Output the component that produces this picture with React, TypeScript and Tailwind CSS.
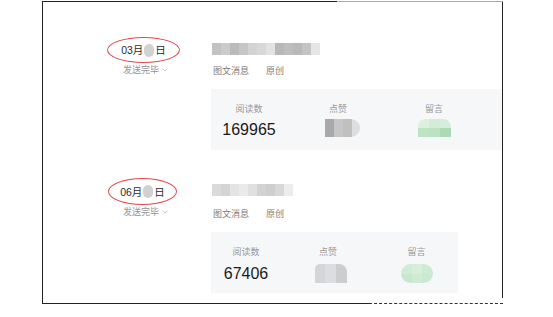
import { ChevronDown } from "lucide-react";

type Post = {
  month: string;
  ellipse: string;
  titleBlocks: string[];
  titleGap: string;
  rowGap: string;
  reads: string;
  numberGap: string;
  like: React.ReactNode;
  comment: React.ReactNode;
  panelWidth: string;
};

const FONT = "font-['Liberation_Sans','Noto_Sans_CJK_SC',sans-serif]";

const POSTS: Post[] = [
  {
    month: "03月",
    ellipse: "w-[73px] h-[26px]",
    titleBlocks: [
      "#c2c2c2",
      "#cbcbcb",
      "#bababa",
      "#c6c6c6",
      "#d3d3d3",
      "#d8d8d8",
      "#e2e2e2",
      "#b8b8b8",
      "#bebebe",
      "#b9b9b9",
      "#c4c4c4",
      "#e6e6e6",
    ],
    titleGap: "mt-[10px]",
    rowGap: "mt-0",
    reads: "169965",
    numberGap: "mt-[5px]",
    panelWidth: "w-[291px]",
    like: (
      <div className="mt-[4px] ml-[8px] flex h-[18px] overflow-hidden rounded-r-full blur-[0.4px]">
        <div className="w-[9px] bg-[#a9a9a9]" />
        <div className="w-[9px] bg-[#c6c6c6]" />
        <div className="w-[9px] bg-[#c0c0c0]" />
        <div className="w-[8px] bg-[#dedee0]" />
      </div>
    ),
    comment: (
      <div className="mt-[4px] ml-px grid h-[18px] w-[33px] grid-cols-3 grid-rows-2 overflow-hidden rounded-t-[8px] blur-[0.4px]">
        <div className="bg-[#dcf0e0]" />
        <div className="bg-[#d2ecd8]" />
        <div className="bg-[#d6eddb]" />
        <div className="bg-[#bde3c4]" />
        <div className="bg-[#bce2c3]" />
        <div className="bg-[#acdab5]" />
      </div>
    ),
  },
  {
    month: "06月",
    ellipse: "w-[69px] h-[27px] ml-px",
    titleBlocks: [
      "#dadada",
      "#d4d4d4",
      "#e4e4e4",
      "#eaeaea",
      "#e0e0e0",
      "#d2d2d2",
      "#cecece",
      "#d8d8d8",
      "#ececec",
    ],
    titleGap: "mt-[12px]",
    rowGap: "mt-[28px]",
    reads: "67406",
    numberGap: "mt-[6px]",
    panelWidth: "w-[247px]",
    like: (
      <div className="mt-[6px] ml-[6px] flex h-[19px] overflow-hidden rounded-tr-[8px] rounded-tl-[5px] blur-[0.4px]">
        <div className="w-[10px] bg-[#d5d5d7]" />
        <div className="w-[11px] bg-[#dcdde0]" />
        <div className="w-[11px] bg-[#cdcdcf]" />
      </div>
    ),
    comment: (
      <div className="mt-[6px] ml-px grid h-[19px] w-[32px] grid-cols-3 grid-rows-2 overflow-hidden rounded-full blur-[0.5px]">
        <div className="bg-[#d0ecd6]" />
        <div className="bg-[#d6efdb]" />
        <div className="bg-[#cdead3]" />
        <div className="bg-[#c8e8cd]" />
        <div className="bg-[#cfebd4]" />
        <div className="bg-[#cae9d0]" />
      </div>
    ),
  },
];

function PostRow({ post }: { post: Post }) {
  return (
    <div className={`flex items-start ${post.rowGap}`}>
      <div className="w-[168px] shrink-0 pl-[64px]">
        <div
          className={`flex items-center justify-center rounded-[50%] border border-[#e2474c] ${post.ellipse}`}
        >
          <span className="text-[10.5px] leading-[12px] text-[#2a2a2a]">{post.month}</span>
          <span className="mx-[1px] h-[13px] w-[10px] rounded-full bg-[#d2d0d0] blur-[0.5px]" />
          <span className="text-[10.5px] leading-[12px] text-[#2a2a2a]">日</span>
        </div>
        <div className="mt-px ml-[16px] flex items-center text-[9px] leading-[12px] text-[#949494]">
          <span>发送完毕</span>
          <ChevronDown className="ml-[2px] h-[8px] w-[8px]" strokeWidth={1.5} />
        </div>
      </div>

      <div className="flex flex-col">
        <div className="ml-px mt-[6px] flex h-[12px] overflow-hidden rounded-r-[5px] blur-[0.3px]">
          {post.titleBlocks.map((c, i) => (
            <div key={i} className="w-[9px]" style={{ backgroundColor: c }} />
          ))}
        </div>
        <div className={`${post.titleGap} ml-[2px] flex gap-[17px] text-[9px] leading-[12px] text-[#7c7c7c]`}>
          <span>图文消息</span>
          <span>原创</span>
        </div>
        <div className={`mt-[12px] flex h-[61px] bg-[#f6f7f9] pt-[14px] ${post.panelWidth}`}>
          <div className="flex w-[76px] flex-col items-center">
            <span className="text-[9px] leading-[12px] text-[#999]">阅读数</span>
            <span className={`${post.numberGap} text-[16px] leading-[20px] text-[#1a1a1a]`}>
              {post.reads}
            </span>
          </div>
          <div className="flex w-[102px] flex-col items-center">
            <span className="text-[9px] leading-[12px] text-[#999]">点赞</span>
            {post.like}
          </div>
          <div className="flex w-[90px] flex-col items-center">
            <span className="text-[9px] leading-[12px] text-[#999]">留言</span>
            {post.comment}
          </div>
        </div>
      </div>
    </div>
  );
}

export default function App() {
  return (
    <div className={`h-[317px] w-[553px] overflow-hidden bg-white pt-px ${FONT}`}>
      <div className="ml-[42px] w-[461px]">
        <div className="flex h-px">
          <div className="w-[295px] bg-[#222]" />
          <div className="flex-1 bg-[#a8a8a8]" />
        </div>
        <div className="flex h-[301px]">
          <div className="w-px bg-[#222]" />
          <div className="flex-1 pt-[35px]">
            {POSTS.map((p) => (
              <PostRow key={p.month} post={p} />
            ))}
          </div>
          <div className="h-[296px] w-px bg-[#222]" />
        </div>
        <div className="flex h-px">
          <div className="w-[327px] bg-[#222]" />
          <div className="flex-1 border-t border-dashed border-[#333]" />
        </div>
      </div>
    </div>
  );
}
